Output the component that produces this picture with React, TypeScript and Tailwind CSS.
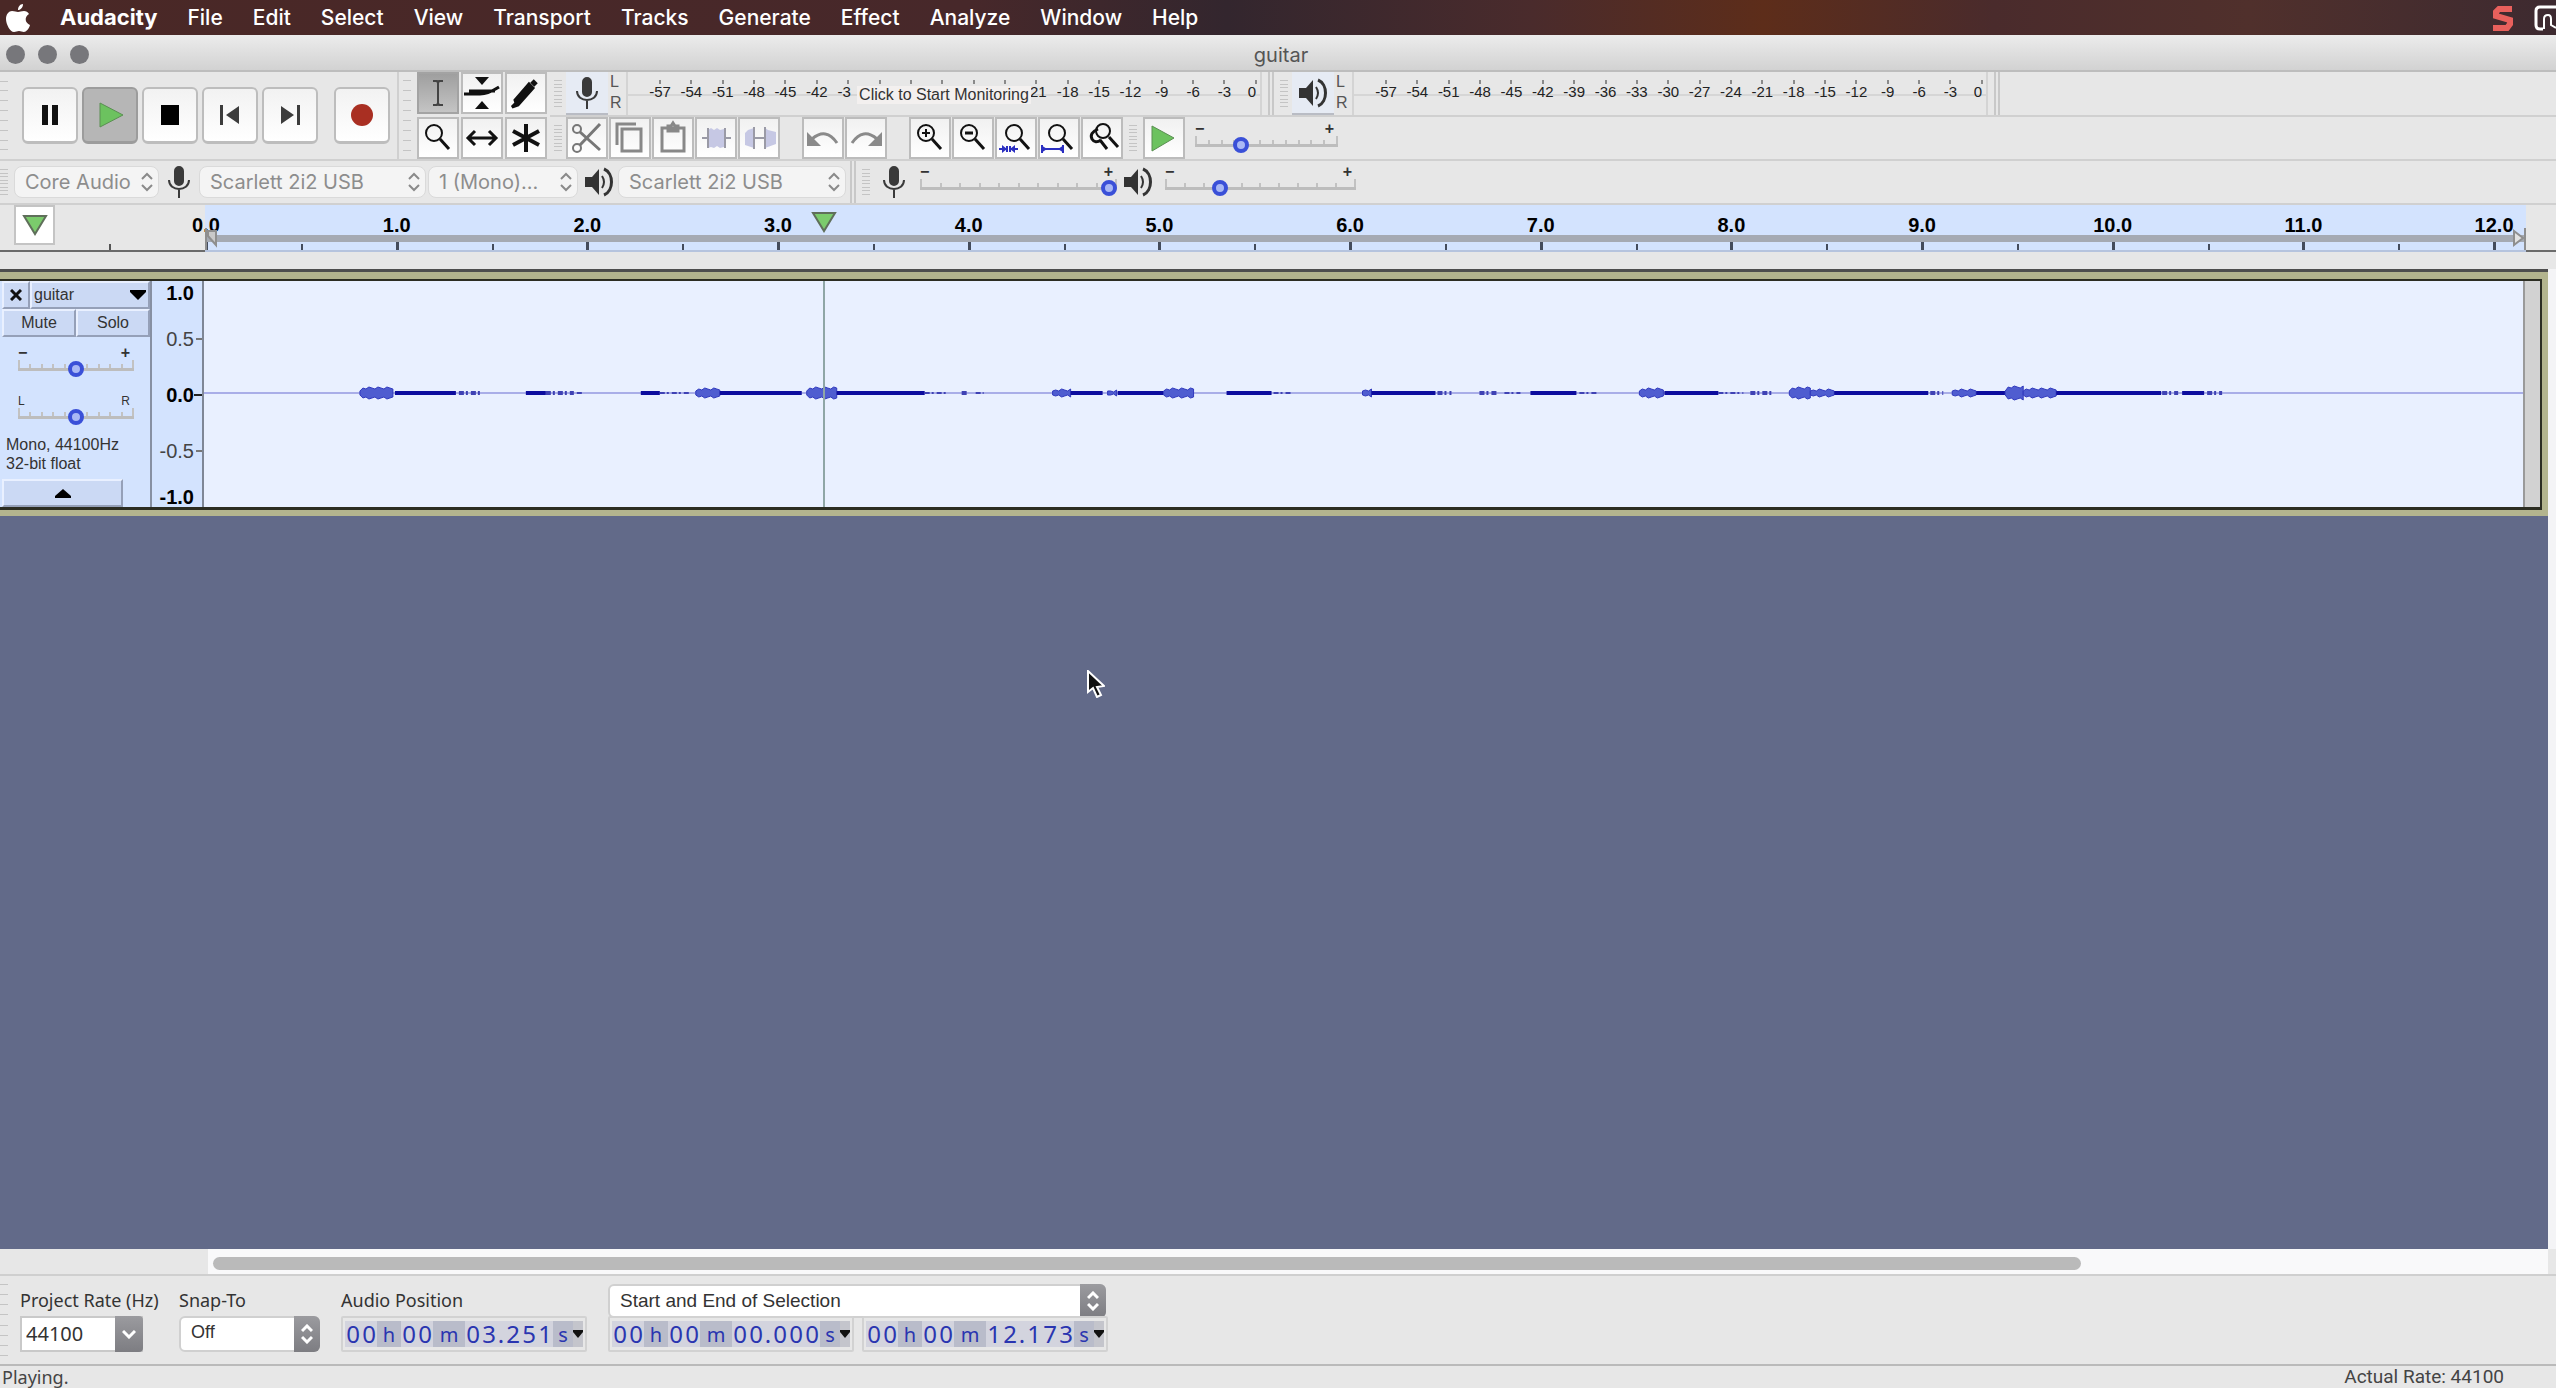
import { ReactNode } from 'react';
import clsx from 'clsx';

const MENUS = ['File', 'Edit', 'Select', 'View', 'Transport', 'Tracks', 'Generate', 'Effect', 'Analyze', 'Window', 'Help'];
const DB_MARKS = [-57, -54, -51, -48, -45, -42, -39, -36, -33, -30, -27, -24, -21, -18, -15, -12, -9, -6, -3, 0];
const SECONDS = [0, 1, 2, 3, 4, 5, 6, 7, 8, 9, 10, 11];
const DURATION = 12.173;
const POSITION = 3.251;

type Kind = 'solid' | 'loud' | 'faint';

// [start, end, kind, half height], in units of the 2320 wide wave view
const WAVE: [number, number, Kind, number][] = [
  [156, 191, 'loud', 6], [191, 252, 'solid', 2], [255, 276, 'faint', 2],
  [322, 342, 'solid', 2], [342, 370, 'faint', 2], [373, 379, 'faint', 1],
  [437, 456, 'solid', 2], [456, 485, 'faint', 1],
  [492, 516, 'loud', 5], [516, 598, 'solid', 2], [603, 633, 'loud', 6], [633, 721, 'solid', 2],
  [721, 742, 'faint', 1], [758, 765, 'faint', 2], [772, 780, 'faint', 1],
  [849, 867, 'loud', 4], [867, 899, 'solid', 2], [904, 914, 'loud', 3], [914, 960, 'solid', 2], [960, 990, 'loud', 5],
  [1023, 1068, 'solid', 2], [1070, 1089, 'faint', 1],
  [1159, 1168, 'loud', 4], [1168, 1232, 'solid', 2], [1234, 1248, 'faint', 2], [1276, 1295, 'faint', 2], [1301, 1317, 'faint', 1],
  [1327, 1373, 'solid', 2], [1376, 1395, 'faint', 1],
  [1436, 1461, 'loud', 5], [1461, 1515, 'solid', 2], [1515, 1540, 'faint', 1], [1547, 1570, 'faint', 2],
  [1586, 1607, 'loud', 6], [1607, 1631, 'loud', 4], [1631, 1725, 'solid', 2], [1727, 1740, 'faint', 2],
  [1749, 1773, 'loud', 4], [1773, 1802, 'solid', 2], [1802, 1820, 'loud', 7], [1820, 1853, 'loud', 5],
  [1853, 1958, 'solid', 2], [1959, 1975, 'faint', 2], [1979, 2001, 'solid', 2], [2004, 2019, 'faint', 2],
];

function loudShape(from: number, to: number, half: number) {
  const top: string[] = [];
  const bottom: string[] = [];
  for (let x = from, i = 0; x <= to; x += 3, i++) {
    const h = i === 0 ? 2 : half - (i % 3);
    top.push(`${x} ${112 - h}`);
    bottom.unshift(`${x} ${112 + h}`);
  }
  return `M${top.join('L')}L${bottom.join('L')}z`;
}

function Grip({ className }: { className?: string }) {
  return (
    <div className={clsx('flex w-2 shrink-0 flex-col justify-between py-2', className)}>
      {Array.from({ length: 8 }, (_, i) => (
        <span key={i} className="h-px bg-[#c4c4c4]" />
      ))}
    </div>
  );
}

function TransportButton({ label, pressed, className, children }: { label: string; pressed?: boolean; className?: string; children: ReactNode }) {
  return (
    <button
      aria-label={label}
      className={clsx(
        'flex h-[57px] w-14 items-center justify-center rounded-md border-2 border-b-[3px]',
        pressed ? 'border-[#9c9c9c] bg-[#b6b6b6]' : 'border-[#bdbdbd] bg-gradient-to-b from-[#f2f2f2] to-white',
        className,
      )}
    >
      <svg viewBox="0 0 32 32" className="size-8">{children}</svg>
    </button>
  );
}

function ToolButton({ label, pressed, children }: { label: string; pressed?: boolean; children: ReactNode }) {
  return (
    <button
      aria-label={label}
      className={clsx(
        'flex h-[42px] w-[42px] shrink-0 items-center justify-center border-2',
        pressed ? 'border-[#a3a3a3] bg-gradient-to-b from-[#9f9f9f] to-[#c4c4c4]' : 'border-[#bcbcbc] bg-gradient-to-b from-[#f1f1f1] to-white',
      )}
    >
      <svg viewBox="0 0 38 38" className="size-[38px]" fill="none" stroke="#111" strokeWidth="2">{children}</svg>
    </button>
  );
}

function MicIcon() {
  return (
    <svg viewBox="0 0 24 32" className="h-8 w-6 shrink-0" fill="none" stroke="#3a3a3a" strokeWidth="2">
      <rect x="8" y="1" width="8" height="18" rx="4" fill="#3a3a3a" />
      <path d="M2 14c0 12 20 12 20 0M12 23v9" />
    </svg>
  );
}

function SpeakerIcon() {
  return (
    <svg viewBox="0 0 30 30" className="size-[30px] shrink-0" fill="none" stroke="#333" strokeWidth="2">
      <path d="M1 10h7l7-8v26l-7-8H1z" fill="#333" stroke="none" />
      <path d="M18 9q4 6 0 12" />
      <path d="M20 2c10 4 10 22 0 26" strokeWidth="3" />
    </svg>
  );
}

function Slider({ label, value, ticks, low = '−', high = '+', className }: { label: string; value: number; ticks: number; low?: string; high?: string; className?: string }) {
  return (
    <div className={clsx('flex shrink-0 flex-col', className)}>
      <div className="flex h-3 items-center justify-between pr-1 text-base leading-3 font-bold text-[#333]">
        <span>{low}</span>
        <span>{high}</span>
      </div>
      <div className="grid h-5">
        <div className="flex h-3 items-end justify-between border-b-3 border-[#bdbdbd] [grid-area:1/1]">
          {Array.from({ length: ticks }, (_, i) => (
            <span key={i} className={clsx('w-0.5 bg-[#c2c2c2]', i === 0 || i === ticks - 1 ? 'h-2' : 'h-1')} />
          ))}
        </div>
        <input
          type="range"
          aria-label={label}
          defaultValue={value}
          className="z-10 h-5 w-full appearance-none bg-transparent [grid-area:1/1] [&::-webkit-slider-thumb]:size-4 [&::-webkit-slider-thumb]:appearance-none [&::-webkit-slider-thumb]:rounded-full [&::-webkit-slider-thumb]:border-4 [&::-webkit-slider-thumb]:border-[#3a50d8] [&::-webkit-slider-thumb]:bg-[#a9b8f5]"
        />
      </div>
    </div>
  );
}

// The prompt sits over the middle of the scale, so only the uncovered part of each mark is shown
function markLabel(db: number, covered: boolean) {
  if (!covered || db < -39 || db > -21) return String(db);
  if (db === -39) return '-3';
  return db === -21 ? '21' : '';
}

function Meter({ prompt, className }: { prompt?: string; className?: string }) {
  return (
    <div className={clsx('flex shrink-0', className)}>
      <div className="flex w-4 flex-col justify-between pt-0.5 pb-1 text-base leading-4 text-[#555]">
        <span>L</span>
        <span>R</span>
      </div>
      <div className="grid h-[43px] flex-1 border-x-2 border-[#d4d4d4]">
        <div className="flex flex-col [grid-area:1/1]">
          <div className="h-6 border-b-2 border-[#d6d6d6]" />
        </div>
        <div className="flex justify-between pt-2 pr-1 pl-8 [grid-area:1/1]">
          {DB_MARKS.map((db) => (
            <div key={db} className="flex w-0 flex-col items-center">
              <span className="h-1 w-0.5 shrink-0 bg-[#8a8a8a]" />
              <span className={clsx('text-[15px] leading-4 text-[#222]', (db === 0 || (prompt && db === -39)) && 'pr-2', prompt && db === -21 && 'pl-1')}>
                {markLabel(db, !!prompt)}
              </span>
            </div>
          ))}
        </div>
        {prompt && (
          <button className="z-10 mt-3.5 h-[18px] w-[174px] self-start justify-self-center bg-[#f3f0ef] text-base leading-[18px] whitespace-nowrap text-[#333] [grid-area:1/1]">
            {prompt}
          </button>
        )}
      </div>
    </div>
  );
}

function DeviceSelect({ label, value, className }: { label: string; value: string; className?: string }) {
  return (
    <div className={clsx('grid shrink-0 items-center', className)}>
      <select aria-label={label} className="h-8 w-full appearance-none rounded-lg border border-[#dadada] bg-[#f4f4f4] pl-2.5 font-[Inter,sans-serif] text-xl text-[#8d8d8d] [grid-area:1/1]">
        <option>{value}</option>
      </select>
      <svg viewBox="0 0 12 20" className="mr-1.5 h-5 w-3 justify-self-end [grid-area:1/1]" fill="none" stroke="#8a8a8a" strokeWidth="2">
        <path d="M1 7l5-5 5 5M1 13l5 5 5-5" />
      </svg>
    </div>
  );
}

function Glass({ x = 17, y = 15, r = 8 }: { x?: number; y?: number; r?: number }) {
  return (
    <>
      <circle cx={x} cy={y} r={r} />
      <path d={`M${x + 6} ${y + 6}l9 10`} strokeWidth="3" />
    </>
  );
}

function TimeField({ label, digits }: { label: string; digits: [string, string, string, string] }) {
  const [h, m, s, ms] = digits;
  const group = (text: string) => text.split('').map((c, i) => (
    <span key={i} className="w-4 bg-[#d3d4de] text-center">{c}</span>
  ));
  return (
    <div role="group" aria-label={label} className="flex h-9 w-[246px] shrink-0 items-center rounded-xs border-2 border-[#d2d2d2] px-0.5 font-['Noto_Sans',sans-serif]">
      <div className="flex h-[26px] bg-[#b9bcca] text-2xl leading-[26px] text-[#2a35b0]">
        {group(h)}
        <span className="w-6 text-center text-xl leading-7">h</span>
        {group(m)}
        <span className="w-8 text-center text-xl leading-7">m</span>
        {group(s)}
        <span className="w-2 bg-[#d3d4de] text-center">.</span>
        {group(ms)}
        <span className="w-5 text-center text-xl leading-7">s</span>
      </div>
      <button aria-label={`${label} format`} className="flex h-[26px] w-3 items-center justify-center bg-[#c4c5cc]">
        <svg viewBox="0 0 10 8" className="h-2 w-2.5"><path d="M0 0h10v2L5 8 0 2z" fill="#111" /></svg>
      </button>
    </div>
  );
}

function Stepper() {
  return (
    <span className="pointer-events-none flex h-full w-[26px] items-center justify-center justify-self-end rounded-r-md bg-gradient-to-b from-[#9b9b9f] to-[#7d7d82] [grid-area:1/1]">
      <svg viewBox="0 0 12 20" className="h-5 w-3" fill="none" stroke="#fff" strokeWidth="3">
        <path d="M1 7l5-5 5 5M1 13l5 5 5-5" />
      </svg>
    </span>
  );
}

function MenuBar() {
  return (
    <nav className="flex h-[35px] shrink-0 items-center overflow-hidden bg-[linear-gradient(90deg,#4a2826_0%,#47282a_38%,#33262e_48%,#4a2b2c_60%,#5d2d1a_69%,#4a2b2c_78%,#50302c_88%,#3d2a30_100%)] pl-1.5 font-[Inter,sans-serif] text-[21px] font-medium text-white">
      <svg viewBox="0 0 24 28" className="mr-[30px] h-7 w-6 shrink-0" fill="#fff">
        <path d="M17 0c0 4-3 6-5 6 0-3 2-6 5-6zM12 8c2 0 3-1 6-1 2 0 4 1 5 3-5 3-4 9 1 11-1 4-4 7-6 7-2 0-3-1-5-1s-3 1-5 1C4 28 0 20 0 15c0-5 3-8 6-8 3 0 4 1 6 1z" />
      </svg>
      <span className="mr-[30px] text-[22px] font-bold">Audacity</span>
      <div className="flex gap-[30px]">
        {MENUS.map((m) => (
          <button key={m}>{m}</button>
        ))}
      </div>
      <svg viewBox="0 0 22 26" className="mr-5 ml-auto h-[26px] w-[22px] shrink-0" fill="none" stroke="#e8605c" strokeWidth="6">
        <path d="M20 4H7L4 7v4l14 4v4l-3 4H1" />
      </svg>
      <svg viewBox="0 0 22 26" className="h-[26px] w-[22px] shrink-0" fill="none" stroke="#fff" strokeWidth="3">
        <path d="M22 2H6Q2 2 2 6v14q0 4 4 4h3" />
        <path d="M10 24V14q0-4 4-4 3 0 3 4v6l5 3" strokeWidth="2" />
      </svg>
    </nav>
  );
}

function Toolbars() {
  return (
    <div className="shrink-0 overflow-hidden bg-[#e7e7e7]">
      <div className="flex">
        <div className="flex w-[399px] shrink-0 items-center border-r-2 border-b-2 border-[#d0d0d0]">
          <Grip className="h-[86px] w-1.5" />
          <div className="ml-3.5 flex gap-1">
            <TransportButton label="Pause"><path d="M8 6h6v20H8zM18 6h6v20h-6z" fill="#111" /></TransportButton>
            <TransportButton label="Play" pressed><path d="M6 4l23 12L6 28z" fill="#6cc25f" stroke="#5a8f52" /></TransportButton>
            <TransportButton label="Stop"><path d="M7 6h18v20H7z" fill="#000" /></TransportButton>
            <TransportButton label="Skip to start"><path d="M6 6h3v20H6zM25 7v18L12 16z" fill="#3c3c3c" /></TransportButton>
            <TransportButton label="Skip to end"><path d="M23 6h3v20h-3zM7 7v18l13-9z" fill="#3c3c3c" /></TransportButton>
            <TransportButton label="Record" className="ml-3"><circle cx="16" cy="16" r="11" fill="#a92f22" /></TransportButton>
          </div>
        </div>
        <div className="flex w-[151px] shrink-0 border-b-2 border-[#d0d0d0] pl-1">
          <Grip className="mr-1.5" />
          <div className="grid grid-cols-3 content-start gap-x-0.5 gap-y-[3px]">
            <ToolButton label="Selection tool" pressed><path d="M14 7h4l1 2 1-2h4M14 31h4l1-2 1 2h4M19 9v20" stroke="#444" /></ToolButton>
            <ToolButton label="Envelope tool">
              <path d="M12 3h14l-7 8zM12 35h14l-7-8z" fill="#111" stroke="none" />
              <path d="M1 20h16q8 0 19-7M6 17h26" strokeWidth="3" />
            </ToolButton>
            <ToolButton label="Draw tool"><path d="M9 29l-4 4 6-2L26 14l-4-4L8 26z" fill="#111" strokeWidth="3" /><path d="M25 7l4 4" strokeWidth="5" /></ToolButton>
            <ToolButton label="Zoom tool"><Glass x={15} y={14} /></ToolButton>
            <ToolButton label="Time shift tool"><path d="M6 19h26M12 12l-7 7 7 7M26 12l7 7-7 7" strokeWidth="3" /></ToolButton>
            <ToolButton label="Multi-tool"><path d="M19 5v28M6 12l26 14M32 12L6 26" strokeWidth="4" /></ToolButton>
          </div>
        </div>
        <div className="min-w-0 flex-1">
          <div className="flex h-[45px] border-b-2 border-[#d0d0d0]">
            <Grip className="mx-1" />
            <button aria-label="Recording meter" className="flex h-[43px] w-[42px] shrink-0 items-center justify-center border-b-2 border-[#b9bcc4] bg-[#e6ebf4]"><MicIcon /></button>
            <Meter className="ml-0.5 w-[652px]" prompt="Click to Start Monitoring" />
            <div className="ml-1.5 h-[43px] w-1.5 shrink-0 border-x-2 border-[#c8c8c8]" />
            <Grip className="mr-1 ml-1.5" />
            <button aria-label="Playback meter" className="flex h-[43px] w-[42px] shrink-0 items-center justify-center border-b-2 border-[#b9bcc4] bg-[#e6ebf4]"><SpeakerIcon /></button>
            <Meter className="ml-0.5 w-[652px]" />
            <div className="ml-1.5 h-[43px] w-1.5 shrink-0 border-x-2 border-[#c8c8c8]" />
          </div>
          <div className="flex h-11 border-b-2 border-[#d0d0d0]">
            <Grip className="mx-1" />
            <div className="flex gap-px">
              <ToolButton label="Cut">
                <g stroke="#777">
                  <circle cx="9" cy="10" r="4" /><circle cx="9" cy="29" r="4" />
                  <path d="M12 13l20 18M12 26L32 5" strokeWidth="3" />
                </g>
              </ToolButton>
              <ToolButton label="Copy"><path d="M6 26V5h19M11 10h19v22H11z" stroke="#888" strokeWidth="3" /></ToolButton>
              <ToolButton label="Paste"><path d="M8 9h22v23H8zM14 12V7h3l2-3 2 3h3v5z" stroke="#888" strokeWidth="3" /></ToolButton>
              <ToolButton label="Trim audio"><path d="M11 11l3-2 3 2 3-2 3 2 4-1v18l-4 1-3-2-3 2-3-1-3 1z" fill="#c6c8e4" stroke="none" /><path d="M5 19h6M28 19h6M11 9v20M28 9v20" stroke="#9a9aa6" /></ToolButton>
              <ToolButton label="Silence audio"><path d="M5 14l3-3 6-2v20l-9-3zM25 9l3 2 8 2v12l-11 4z" fill="#c6c8e4" stroke="none" /><path d="M14 19h11M14 8v22M25 8v22" stroke="#9a9aa6" /></ToolButton>
            </div>
            <div className="ml-[22px] flex gap-px">
              <ToolButton label="Undo"><path d="M8 20q14-12 25 4" stroke="#8a8a8a" strokeWidth="3" /><path d="M3 13v14h14z" fill="#8a8a8a" stroke="none" /></ToolButton>
              <ToolButton label="Redo"><path d="M30 20Q16 8 5 24" stroke="#8a8a8a" strokeWidth="3" /><path d="M35 13v14H21z" fill="#8a8a8a" stroke="none" /></ToolButton>
            </div>
            <div className="ml-[22px] flex gap-px">
              <ToolButton label="Zoom in"><Glass x={15} y={14} /><path d="M11 14h8M15 10v8" /></ToolButton>
              <ToolButton label="Zoom out"><Glass x={15} y={14} /><path d="M11 14h8" strokeWidth="3" /></ToolButton>
              <ToolButton label="Fit selection"><Glass y={14} /><path d="M2 30h8M13 30h8M10 27v6M13 27v6" stroke="#2a2ec0" /><path d="M5 26v8l5-4zM18 26v8l-5-4z" fill="#2a2ec0" stroke="none" /></ToolButton>
              <ToolButton label="Fit project"><Glass y={14} /><path d="M2 30h20M2 26v8M23 26v8" stroke="#2a2ec0" /><path d="M1 26v8l6-4zM24 26v8l-6-4z" fill="#2a2ec0" stroke="none" /></ToolButton>
              <ToolButton label="Zoom toggle"><Glass x={20} y={12} r={7} /><path d="M15 10q-9 4-6 10 3 5 9 1M17 21l7 9" strokeWidth="3" /></ToolButton>
            </div>
            <Grip className="mx-1.5" />
            <ToolButton label="Play at speed"><path d="M7 7l22 12L7 32z" fill="#6cc25f" stroke="#5a8f52" strokeWidth="1" /></ToolButton>
            <Slider label="Playback speed" value={30} ticks={12} className="ml-2.5 w-[143px] pt-1.5" />
          </div>
        </div>
      </div>
      <div className="flex h-11 items-center border-b-2 border-[#d0d0d0]">
        <Grip className="h-[42px] w-1.5" />
        <DeviceSelect label="Audio host" value="Core Audio" className="ml-1.5 w-[145px]" />
        <div className="mx-2 flex"><MicIcon /></div>
        <DeviceSelect label="Recording device" value="Scarlett 2i2 USB" className="w-[227px]" />
        <DeviceSelect label="Recording channels" value="1 (Mono)..." className="ml-0.5 w-[150px]" />
        <div className="mr-1 ml-1.5 flex"><SpeakerIcon /></div>
        <DeviceSelect label="Playback device" value="Scarlett 2i2 USB" className="w-[228px]" />
        <div className="ml-1 h-[42px] w-1.5 shrink-0 border-x-2 border-[#c8c8c8]" />
        <Grip className="mr-3 ml-1.5 h-[42px]" />
        <MicIcon />
        <Slider label="Recording volume" value={100} ticks={11} className="ml-3.5 w-[197px]" />
        <div className="ml-1.5 flex"><SpeakerIcon /></div>
        <Slider label="Playback volume" value={27} ticks={11} className="ml-3 w-[191px]" />
      </div>
    </div>
  );
}

function Ruler() {
  return (
    <div className="flex h-[47px] shrink-0 bg-[#e7e7e7] text-xl font-bold text-black">
      <div className="flex w-[205px] shrink-0 border-b-2 border-[#6b6b6b] pl-3.5">
        <button aria-label="Pinned play head" className="flex h-10 w-[41px] items-center justify-center border-2 border-[#c4c4c4] bg-white">
          <svg viewBox="0 0 26 22" className="h-[22px] w-[26px]"><path d="M2 2h22L13 20z" fill="#7bcb6c" stroke="#5f6f5a" strokeWidth="2" /></svg>
        </button>
        <span className="mt-auto ml-[54px] h-1.5 w-0.5 bg-[#555]" />
      </div>
      <div className="relative flex flex-1 flex-col border-b-2 border-[#b6c4de] bg-[#d3e3fe]">
        <div className="flex h-[30px]">
          {[...SECONDS, 12].map((s) => (
            <div key={s} className={clsx('flex min-w-0 basis-0', s === 12 ? 'grow-[0.173]' : 'grow')}>
              <div className="flex w-0 justify-center">
                <span className="pt-1.5 pl-0.5 leading-7">{s.toFixed(1)}</span>
              </div>
            </div>
          ))}
        </div>
        <div className="h-[7px] bg-[#a5aab3]" />
        <div className="flex flex-1">
          {SECONDS.map((s) => (
            <div key={s} className="flex flex-1 items-end">
              <span className="h-2 w-[3px] bg-[#444c5c]" />
              <span className="flex-1" />
              <span className="h-1.5 w-0.5 bg-[#444c5c]" />
              <span className="flex-1" />
            </div>
          ))}
          <div className="flex grow-[0.173] basis-0 items-end"><span className="h-2 w-[3px] bg-[#444c5c]" /></div>
        </div>
        <svg viewBox="0 0 12 22" className="absolute bottom-0 left-0 h-[22px] w-3" fill="#c9c9c9" stroke="#8f8f8f" strokeWidth="2"><path d="M1 0v22M3 3l8 0v14L3 8z" /></svg>
        <svg viewBox="0 0 14 22" className="absolute right-0 bottom-0 h-[22px] w-3.5" fill="#e2e2e2" stroke="#8f8f8f" strokeWidth="2"><path d="M13 0v22M2 3v14l9-7z" /></svg>
        <svg viewBox="0 0 26 22" className="absolute top-1.5 -ml-3.5 h-[22px] w-[26px]" style={{ left: `${(POSITION / DURATION) * 100}%` }}>
          <path d="M2 2h22L13 20z" fill="#7bcb6c" stroke="#5f6f5a" strokeWidth="2" />
        </svg>
      </div>
      <div className="w-[30px] shrink-0 border-b-2 border-[#6b6b6b]" />
    </div>
  );
}

function Waveform() {
  return (
    <div className="relative flex-1 border-l-2 border-[#7f8796] bg-[#e9f0ff]">
      <svg viewBox="0 0 2320 226" preserveAspectRatio="none" className="h-full w-full">
        <path d="M0 112H2320" stroke="#a9aee8" strokeWidth="2" />
        {WAVE.map(([from, to, kind, half]) => {
          if (kind === 'solid') return <rect key={from} x={from} y={110} width={to - from} height={half * 2} fill="#0c0c9e" />;
          if (kind === 'faint') return <path key={from} d={`M${from} 112H${to}`} stroke="#3f42b4" strokeWidth={half * 2} strokeDasharray="5 2 2 3" />;
          return <path key={from} d={loudShape(from, to, half)} fill="#4f5dd0" stroke="#3039bd" strokeWidth="1" />;
        })}
      </svg>
      <div className="absolute inset-y-0 w-0.5 bg-[#8fa6a6]" style={{ left: `${(POSITION / DURATION) * 100}%` }} />
    </div>
  );
}

function Track() {
  const cell = 'border-2 border-t-[#e9f0ff] border-l-[#e9f0ff] border-r-[#95a0b8] border-b-[#95a0b8] bg-[#cbd9f4]';
  return (
    <div className="mr-2 border-t-[3px] border-[#4e4e4e]">
      <div className="border-t-[7px] border-r-[6px] border-b-[6px] border-[#b3b48e]">
        <div className="flex h-[231px] border-t-2 border-r-2 border-b-[3px] border-[#2c2d22] bg-[#d3e3fe] text-base text-[#333]">
          <div className="flex w-[152px] shrink-0 flex-col border-r-2 border-[#8790a2] pl-0.5">
            <div className="flex h-7">
              <button aria-label="Close track" className={clsx('flex w-7 items-center justify-center', cell)}>
                <svg viewBox="0 0 12 12" className="size-3" stroke="#111" strokeWidth="3"><path d="M1 1l10 10M11 1L1 11" /></svg>
              </button>
              <button className={clsx('flex flex-1 items-center justify-between px-0.5 leading-5', cell)}>
                guitar
                <svg viewBox="0 0 16 10" className="h-2.5 w-4"><path d="M0 0h16v2L8 10 0 2z" fill="#000" /></svg>
              </button>
            </div>
            <div className="flex h-7">
              <button className={clsx('flex-1 leading-6', cell)}>Mute</button>
              <button className={clsx('flex-1 leading-6', cell)}>Solo</button>
            </div>
            <Slider label="Gain" value={50} ticks={11} className="mx-4 mt-2.5" />
            <Slider label="Pan" value={50} ticks={11} low="L" high="R" className="mx-4 mt-4 [&_span]:text-xs [&_span]:font-normal" />
            <p className="mt-2 ml-1 leading-[19px]">Mono, 44100Hz<br />32-bit float</p>
            <button aria-label="Collapse track" className={clsx('mt-auto flex h-7 w-[121px] items-center justify-center', cell)}>
              <svg viewBox="0 0 16 9" className="h-[9px] w-4"><path d="M0 9h16V7L8 0 0 7z" fill="#000" /></svg>
            </button>
          </div>
          <div className="flex w-[50px] shrink-0 flex-col items-end text-xl leading-6 font-bold text-black">
            <span className="pr-2">1.0</span>
            <span className="mt-[22px] flex items-center gap-0.5 font-normal text-[#444]">0.5<i className="h-0.5 w-1.5 bg-[#777]" /></span>
            <span className="mt-8 flex items-center">0.0<i className="h-0.5 w-2 bg-[#222]" /></span>
            <span className="mt-8 flex items-center gap-0.5 font-normal text-[#444]">-0.5<i className="h-0.5 w-1.5 bg-[#777]" /></span>
            <span className="mt-[22px] pr-2">-1.0</span>
          </div>
          <Waveform />
          <div className="w-[17px] shrink-0 border-l-2 border-[#9a9a9a] bg-[#d2d2d2]" />
        </div>
      </div>
    </div>
  );
}

function SelectionBar() {
  return (
    <div className="flex h-[90px] shrink-0 border-b-2 border-[#bababa] bg-[#e7e7e7] font-['Noto_Sans',sans-serif] text-lg text-[#333]">
      <Grip className="w-1.5" />
      <div className="flex w-[159px] flex-col pt-3 pl-3">
        <label htmlFor="rate" className="h-7 leading-6 whitespace-nowrap">Project Rate (Hz)</label>
        <div className="grid h-9 w-[123px]">
          <input id="rate" defaultValue="44100" className="w-full border-2 border-[#c9c9c9] bg-white pl-1 text-xl [grid-area:1/1]" />
          <span className="flex w-7 items-center justify-center justify-self-end rounded-r-sm bg-gradient-to-b from-[#9b9b9f] to-[#7d7d82] [grid-area:1/1]">
            <svg viewBox="0 0 14 9" className="h-[9px] w-3.5" fill="none" stroke="#fff" strokeWidth="3"><path d="M1 1l6 6 6-6" /></svg>
          </span>
        </div>
      </div>
      <div className="flex w-[162px] flex-col pt-3 pl-3">
        <label htmlFor="snap" className="h-7 leading-6">Snap-To</label>
        <div className="grid h-[34px] w-[141px]">
          <select id="snap" className="w-full appearance-none rounded-md border-2 border-[#d0d0d0] bg-white pb-1 pl-2.5 font-['Liberation_Sans',sans-serif] [grid-area:1/1]"><option>Off</option></select>
          <Stepper />
        </div>
      </div>
      <div className="flex w-[267px] flex-col pt-3 pl-3">
        <span className="h-7 leading-6">Audio Position</span>
        <TimeField label="Audio position" digits={['00', '00', '03', '251']} />
      </div>
      <div className="flex flex-col pt-2 pl-3">
        <div className="grid h-8 w-[498px]">
          <select aria-label="Selection mode" className="w-full appearance-none rounded-md border-2 border-[#d0d0d0] bg-white pl-2.5 font-['Liberation_Sans',sans-serif] text-[19px] [grid-area:1/1]"><option>Start and End of Selection</option></select>
          <Stepper />
        </div>
        <div className="flex gap-2">
          <TimeField label="Selection start" digits={['00', '00', '00', '000']} />
          <TimeField label="Selection end" digits={['00', '00', '12', '173']} />
        </div>
      </div>
    </div>
  );
}

export default function App() {
  return (
    <div className="flex h-screen flex-col overflow-hidden bg-[#e7e7e7] font-['Liberation_Sans',Arial,sans-serif]">
      <MenuBar />
      <header className="flex h-[37px] shrink-0 items-center border-b-2 border-[#bdbdbd] bg-gradient-to-b from-[#ececec] to-[#d2d2d2] pt-1 pl-1.5">
        <div className="flex flex-1 gap-[13px]">
          <span className="size-[19px] rounded-full bg-[#77777b]" />
          <span className="size-[19px] rounded-full bg-[#77777b]" />
          <span className="size-[19px] rounded-full bg-[#77777b]" />
        </div>
        <h1 className="font-[Inter,sans-serif] text-xl text-[#555]">guitar</h1>
        <div className="flex-1" />
      </header>
      <Toolbars />
      <Ruler />
      <main className="flex flex-1 flex-col bg-[#f4f4f6]">
        <div className="h-[17px] bg-[#e7e7e7]" />
        <Track />
        <div className="relative mr-2 flex-1 bg-[#626a89]">
          <svg viewBox="0 0 18 28" className="absolute top-[154px] left-[1087px] h-7 w-[18px]"><path d="M1 1v21l5-4 4 9 4-2-4-8 7-1z" fill="#111" stroke="#fff" strokeWidth="2" /></svg>
        </div>
      </main>
      <div className="flex h-[27px] shrink-0 border-b-2 border-[#cfcfcf]">
        <div className="w-[208px] shrink-0" />
        <div className="mr-2 flex flex-1 items-center bg-[#f9f9fa] pt-1 pl-[5px]">
          <div className="h-[13px] w-4/5 rounded-full bg-[#bababa]" />
        </div>
      </div>
      <SelectionBar />
      <footer className="flex h-[22px] shrink-0 items-center justify-between pr-[52px] pl-0.5 text-lg leading-5 text-[#444]">
        <span className="font-['Noto_Sans',sans-serif]">Playing.</span>
        <span className="font-[Roboto,sans-serif] text-[19px]">Actual Rate: 44100</span>
      </footer>
    </div>
  );
}
